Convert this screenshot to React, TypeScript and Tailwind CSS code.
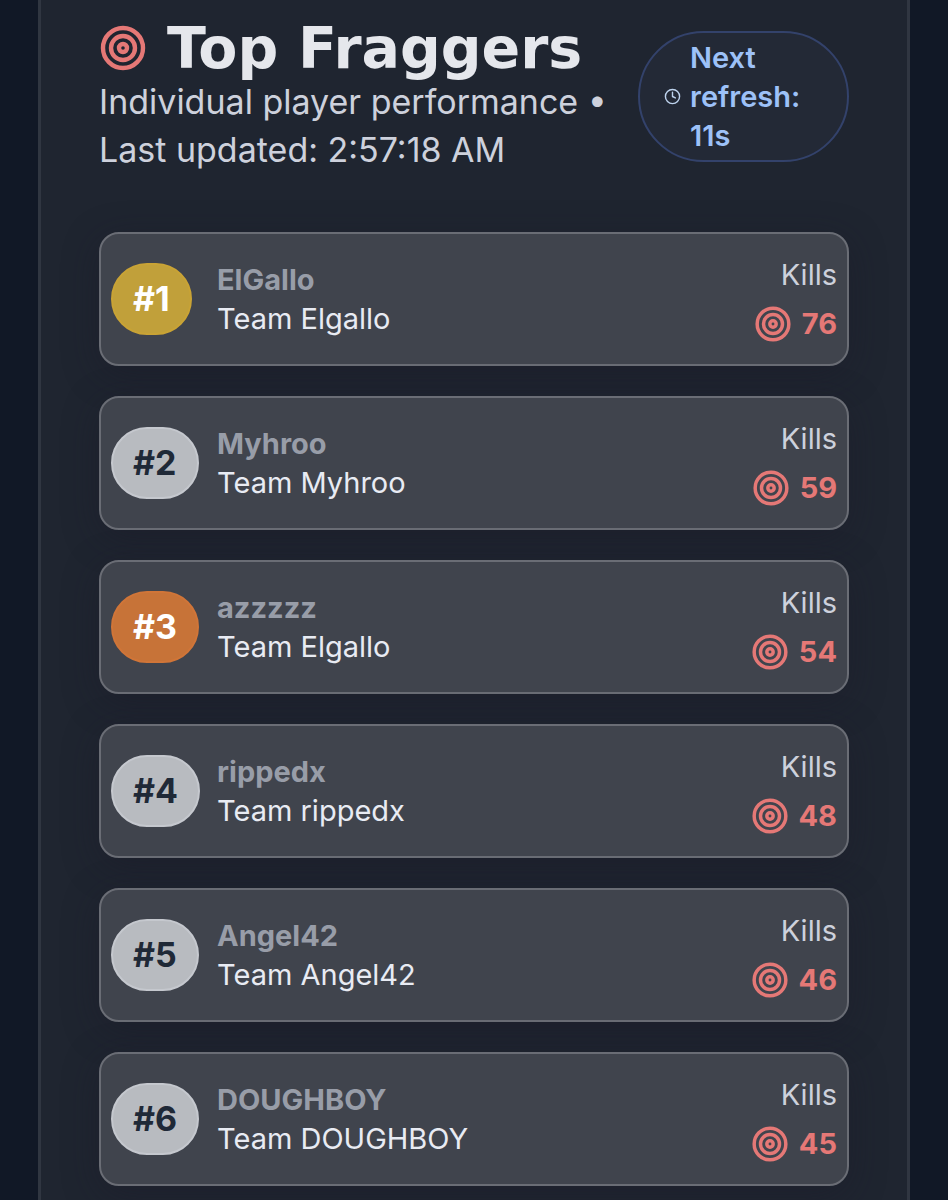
import React from "react";
import { Clock, Target } from "lucide-react";

interface Fragger {
  rank: number;
  player: string;
  team: string;
  kills: number;
}

const FRAGGERS: Fragger[] = [
  { rank: 1, player: "ElGallo", team: "Team Elgallo", kills: 76 },
  { rank: 2, player: "Myhroo", team: "Team Myhroo", kills: 59 },
  { rank: 3, player: "azzzzz", team: "Team Elgallo", kills: 54 },
  { rank: 4, player: "rippedx", team: "Team rippedx", kills: 48 },
  { rank: 5, player: "Angel42", team: "Team Angel42", kills: 46 },
  { rank: 6, player: "DOUGHBOY", team: "Team DOUGHBOY", kills: 45 }
];

// gold for 1st, bronze for 3rd, everyone else is silver
const getBadgeColors = (rank: number) => {
  if (rank === 1) return "bg-[#c1a03a] border-[#c9a335] text-white";
  if (rank === 3) return "bg-[#c77338] border-[#d07538] text-white";
  return "bg-[#b8bbc0] border-[#c5c8ce] text-[#1f2937]";
};

function FraggerRow({ rank, player, team, kills }: Fragger) {
  return (
    <li className="flex items-center justify-between rounded-[20px] border-2 border-[#6a6d75] bg-[#40444d] px-2.5 py-[21px] shadow-[0_8px_36px_rgba(28,24,40,0.4)]">
      <div className="flex items-center gap-[18px]">
        <div className="flex w-22 shrink-0">
          <span
            className={`rounded-full border-2 px-5 py-2.5 text-[34px] leading-[48px] font-bold ${getBadgeColors(rank)}`}
          >
            #{rank}
          </span>
        </div>
        <div className="text-[29px] leading-[39px]">
          <h2 className="font-bold text-[#989da8]">{player}</h2>
          <p className="text-[#e8ebf3]">{team}</p>
        </div>
      </div>
      <div className="flex flex-col items-end gap-2.5 text-[29px] leading-[39px]">
        <span className="text-[#cdd1dc]">Kills</span>
        <span className="flex items-center gap-2.5 font-bold text-[#e57876]">
          <Target className="size-[38px]" strokeWidth={2.2} />
          {kills}
        </span>
      </div>
    </li>
  );
}

export default function App() {
  return (
    <div className="min-h-screen bg-[#111826] px-[38px] font-[Inter,sans-serif]">
      <main className="min-h-screen border-x-3 border-[#303641] bg-[#1f2530] px-[58px] pt-[18px] pb-3">
        <header className="flex items-center justify-between gap-6">
          <div>
            <h1 className="flex items-center gap-5 font-['DejaVu_Sans',sans-serif] text-[57px] leading-[60px] font-bold whitespace-nowrap text-[#e5e7ec]">
              <Target className="size-12 shrink-0 text-[#e57876]" strokeWidth={2.2} />
              Top Fraggers
            </h1>
            <p className="text-[34px] leading-[48px] text-[#cdd1dc]">
              Individual player performance • Last updated: 2:57:18 AM
            </p>
          </div>
          <div className="flex w-[211px] shrink-0 items-center gap-[9px] rounded-full border-2 border-[#33426b] bg-[#232936] px-6 py-[5px] text-[29px] leading-[39px] font-semibold text-[#9dc1f8]">
            <Clock className="size-[17px] shrink-0 text-[#bed3ee]" />
            <span>Next refresh: 11s</span>
          </div>
        </header>

        <ol className="mt-[58px] flex flex-col gap-[30px]">
          {FRAGGERS.map(f => (
            <FraggerRow key={f.rank} {...f} />
          ))}
        </ol>
      </main>
    </div>
  );
}
